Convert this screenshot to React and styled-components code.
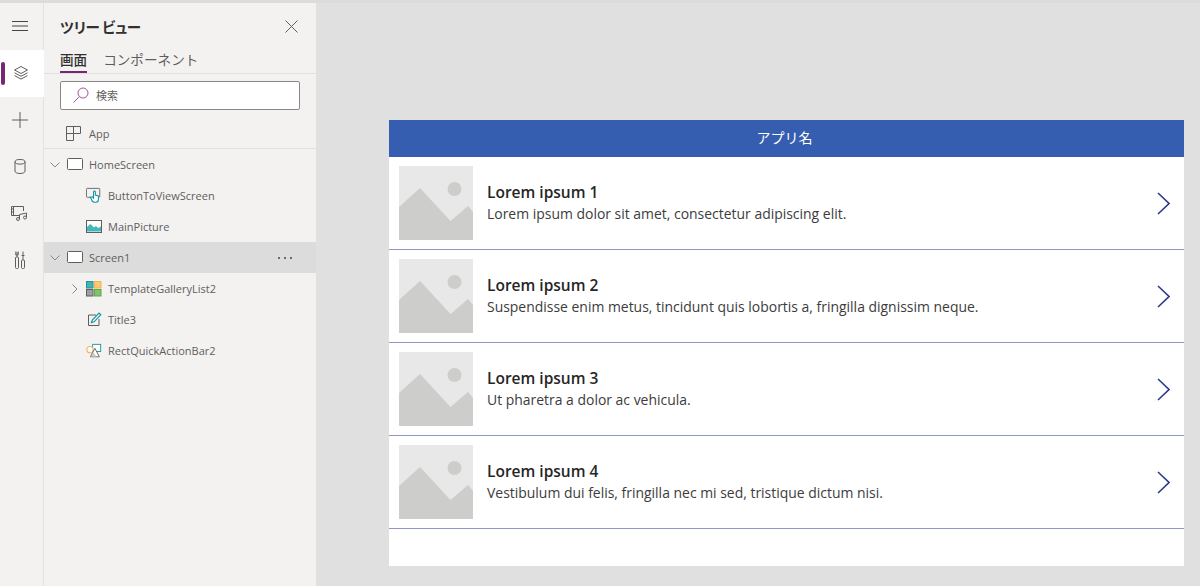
import React from "react";
import styled, { createGlobalStyle } from "styled-components";

const GlobalStyle = createGlobalStyle`
  html, body {
    margin: 0;
    padding: 0;
    height: 100%;
    overflow: hidden;
    background: #e0e0e0;
  }
  body {
    font-family: "Open Sans", "Noto Sans CJK JP", sans-serif;
  }
`;

const Page = styled.div`
  display: flex;
  height: 586px;
  width: 1200px;
  border-top: 3px solid #dcdcdc;
  box-sizing: border-box;
`;

const Rail = styled.nav`
  width: 44px;
  flex: none;
  display: flex;
  flex-direction: column;
  background: #f3f2f1;
  border-right: 1px solid #e3e2e1;
  box-sizing: border-box;
`;

const RailItem = styled.div`
  height: ${({ active }) => (active ? "47px" : "46.6px")};
  display: flex;
  align-items: center;
  justify-content: center;
  padding-right: 3px;
  box-sizing: border-box;
  position: relative;
  color: #605e5c;
  background: ${({ active }) => (active ? "#ffffff" : "transparent")};
  margin-right: ${({ active }) => (active ? "-1px" : "0")};
`;

const RailMarker = styled.span`
  position: absolute;
  left: 1px;
  top: 12px;
  width: 4px;
  height: 23px;
  border-radius: 2px;
  background: #742774;
`;

const Panel = styled.aside`
  width: 272px;
  flex: none;
  background: #f3f2f1;
  display: flex;
  flex-direction: column;
`;

const PanelHead = styled.div`
  height: 47px;
  display: flex;
  align-items: center;
  justify-content: space-between;
  padding: 0 18px 0 16px;
`;

const PanelTitle = styled.h2`
  margin: 0;
  font-size: 14.5px;
  font-weight: 700;
  letter-spacing: -0.4px;
  color: #323130;
  font-family: "Noto Sans CJK JP", sans-serif;
  font-feature-settings: "palt";
`;

const Tabs = styled.div`
  display: flex;
  gap: 16px;
  height: 23px;
  padding: 0 16px;
  border-bottom: 1px solid #e1dfdd;
`;

const Tab = styled.div`
  height: 23px;
  box-sizing: border-box;
  font-size: 13.6px;
  line-height: 19px;
  font-family: "Noto Sans CJK JP", sans-serif;
  color: ${({ active }) => (active ? "#323130" : "#605e5c")};
  font-weight: ${({ active }) => (active ? 500 : 400)};
  border-bottom: ${({ active }) => (active ? "2px solid #742774" : "none")};
`;

const SearchBox = styled.div`
  margin: 7px 16px 0;
  height: 29px;
  box-sizing: border-box;
  display: flex;
  align-items: center;
  gap: 7px;
  padding: 0 0 1px 12px;
  background: #ffffff;
  border: 1px solid #8a8886;
  border-radius: 2px;
  font-size: 11px;
  color: #605e5c;
  font-family: "Noto Sans CJK JP", sans-serif;
`;

const AppRow = styled.div`
  height: 39px;
  display: flex;
  align-items: center;
  gap: 8px;
  padding: 8px 0 0 22px;
  box-sizing: border-box;
  border-bottom: 1px solid #e1dfdd;
`;

const Row = styled.div`
  height: 31px;
  display: flex;
  align-items: center;
  padding-left: ${({ depth }) => (depth ? "42px" : "5px")};
  padding-right: 24px;
  background: ${({ selected }) => (selected ? "#dcdcdc" : "transparent")};
`;

const Chevron = styled.span`
  width: 12px;
  height: 12px;
  display: flex;
  align-items: center;
  justify-content: center;
  flex: none;
  margin-right: ${({ nested }) => (nested ? "5px" : "6px")};
  margin-left: ${({ nested }) => (nested ? "-17px" : "0")};
`;

const RowIcon = styled.span`
  width: 16px;
  height: 16px;
  flex: none;
  display: flex;
  align-items: center;
  justify-content: center;
  margin-right: 6px;
`;

const RowLabel = styled.span`
  flex: 1;
  font-size: 11px;
  color: #605e5c;
  white-space: nowrap;
`;

const Dots = styled.span`
  display: flex;
  gap: 4px;
  & > i {
    width: 2px;
    height: 2px;
    background: #484644;
    border-radius: 50%;
  }
`;

const Canvas = styled.main`
  flex: 1;
  padding: 117px 16px 20px 73px;
  background: #e0e0e0;
  display: flex;
`;

const Screen = styled.section`
  flex: 1;
  background: #ffffff;
  display: flex;
  flex-direction: column;
`;

const AppBar = styled.header`
  height: 37px;
  flex: none;
  box-sizing: border-box;
  padding: 0 4px 3px 0;
  background: #365eb0;
  color: #ffffff;
  font-size: 14px;
  font-family: "Noto Sans CJK JP", sans-serif;
  display: flex;
  align-items: center;
  justify-content: center;
`;

const Item = styled.article`
  height: 93px;
  box-sizing: border-box;
  flex: none;
  display: flex;
  align-items: center;
  padding: 0 14px 0 10px;
  border-bottom: 1px solid #8f97c9;
`;

const Thumb = styled.svg`
  width: 74px;
  height: 74px;
  flex: none;
  margin-right: 14px;
`;

const ItemText = styled.div`
  flex: 1;
  padding-bottom: 1px;
`;

const ItemTitle = styled.div`
  font-size: 15.5px;
  font-weight: 600;
  line-height: 22px;
  color: #262626;
`;

const ItemBody = styled.div`
  font-size: 13.95px;
  line-height: 20px;
  margin-top: 1px;
  color: #3c3c3c;
`;

const stroke = { fill: "none", stroke: "#605e5c", strokeWidth: 1 };

const ScreenIcon = () => (
  <svg width="16" height="13" viewBox="0 0 16 13">
    <rect x="0.5" y="0.5" width="15" height="11" rx="1" fill="#fff" stroke="#605e5c" />
  </svg>
);

const ButtonIcon = () => (
  <svg width="18" height="17" viewBox="0 0 18 17">
    <path d="M6 10.5H1.5a1 1 0 0 1-1-1V1.5a1 1 0 0 1 1-1h13a1 1 0 0 1 1 1v8a1 1 0 0 1-1 1H14" {...stroke} />
    <path d="M8.5 4.5a1 1 0 0 1 2 0V8l3.5 1v4a3 3 0 0 1-3 3H9.500a3 3 0 0 1-3-2.500L5 10.500 7 10l1.500 1.500z" fill="#fff" stroke="#0f95a5" strokeWidth="1.200" />
  </svg>
);

const PictureIcon = () => (
  <svg width="16" height="13" viewBox="0 0 16 13">
    <rect x="0.5" y="0.5" width="15" height="12" fill="#fff" stroke="#605e5c" />
    <path d="M1 11.500V7l3.500-3 3.500 3.500 2-1.500 2 2 3-1.500v5z" fill="#45b8b8" />
  </svg>
);

const GalleryIcon = () => (
  <svg width="16" height="16" viewBox="0 0 16 16">
    <rect x="0.500" y="0.500" width="6.500" height="6.500" fill="#3fb5b5" stroke="#2f8f8f" />
    <rect x="8.500" y="0.500" width="6.500" height="6.500" fill="#fdc874" stroke="#f2b457" />
    <rect x="0.500" y="8.500" width="6.500" height="6.500" fill="#a19f9d" stroke="#605e5c" />
    <rect x="8.500" y="8.500" width="6.500" height="6.500" fill="#7cc46c" stroke="#5aa84a" />
  </svg>
);

const TitleIcon = () => (
  <svg width="15" height="15" viewBox="0 0 15 15">
    <path d="M9 3H1.500v10.500H12V7" {...stroke} />
    <path d="M4.500 10.500l.8-2.500L12 1l1.800 1.800-6.800 7z" fill="#fff" stroke="#0f95a5" strokeWidth="1.200" />
  </svg>
);

const QuickBarIcon = () => (
  <svg width="18" height="16" viewBox="0 0 18 16">
    <rect x="7.500" y="0.500" width="9" height="8" fill="#fff" stroke="#0f95a5" />
    <circle cx="4.500" cy="6.500" r="3.500" fill="#fff" stroke="#f2b457" strokeWidth="1.200" />
    <path d="M10 5l5 9.500H5z" fill="#fff" stroke="#605e5c" />
    <path d="M8 9.500l4 5H6z" fill="#c8c6c4" />
  </svg>
);

const ChevronDown = () => (
  <svg width="10" height="6" viewBox="0 0 10 6"><path d="M0.500 0.500L5 5l4.500-4.500" fill="none" stroke="#8a8886" /></svg>
);

const ChevronRight = () => (
  <svg width="6" height="10" viewBox="0 0 6 10"><path d="M0.500 0.500L5 5 0.500 9.500" fill="none" stroke="#8a8886" /></svg>
);

const Placeholder = () => (
  <Thumb viewBox="0 0 74 74">
    <rect width="74" height="74" fill="#e8e8e8" />
    <circle cx="55.500" cy="23" r="7" fill="#cdcdcb" />
    <path d="M0 41L21 22 51.500 55 69 40 74 46V74H0z" fill="#cdcdcb" />
  </Thumb>
);

const NextArrow = () => (
  <svg width="13" height="23" viewBox="0 0 13 23">
    <path d="M1 1l11 10.500L1 22" fill="none" stroke="#2b3a8c" strokeWidth="1.600" />
  </svg>
);

const items = [
  ["Lorem ipsum 1", "Lorem ipsum dolor sit amet, consectetur adipiscing elit."],
  ["Lorem ipsum 2", "Suspendisse enim metus, tincidunt quis lobortis a, fringilla dignissim neque."],
  ["Lorem ipsum 3", "Ut pharetra a dolor ac vehicula."],
  ["Lorem ipsum 4", "Vestibulum dui felis, fringilla nec mi sed, tristique dictum nisi."],
];

export default function App() {
  return (
    <>
      <GlobalStyle />
      <Page>
        <Rail>
          <RailItem>
            <svg width="16" height="12" viewBox="0 0 16 12">
              <path d="M0 1.500h16M0 6h16M0 10.500h16" fill="none" stroke="#484644" />
            </svg>
          </RailItem>
          <RailItem active>
            <RailMarker />
            <svg width="16" height="16" viewBox="0 0 16 16">
              <path d="M8 1.500l6.500 3.500L8 8.500 1.500 5z" {...stroke} />
              <path d="M1.500 7.800L8 11.300l6.500-3.500M1.500 10.600L8 14.100l6.500-3.500" {...stroke} />
            </svg>
          </RailItem>
          <RailItem>
            <svg width="16" height="16" viewBox="0 0 16 16">
              <path d="M8 0v16M0 8h16" fill="none" stroke="#605e5c" />
            </svg>
          </RailItem>
          <RailItem>
            <svg width="12" height="15" viewBox="0 0 12 15">
              <ellipse cx="6" cy="2.800" rx="5" ry="2.300" {...stroke} />
              <path d="M1 2.800v9.400c0 1.300 2.200 2.300 5 2.300s5-1 5-2.300V2.800" {...stroke} />
            </svg>
          </RailItem>
          <RailItem>
            <svg width="18" height="16" viewBox="0 0 18 16">
              <path d="M8 10.500H.5V1.500h12V6M2.500 1.500v9M.5 4h2M.5 7h2" {...stroke} />
              <path d="M8.500 14V9.500l7-1.500v4.500" {...stroke} />
              <circle cx="7" cy="14" r="1.500" {...stroke} />
              <circle cx="14" cy="12.500" r="1.500" {...stroke} />
            </svg>
          </RailItem>
          <RailItem>
            <svg width="10" height="18" viewBox="0 0 10 18">
              <rect x="0.500" y="6" width="3" height="11.500" rx="1" {...stroke} />
              <path d="M2 6V1M.8.500v3.500h2.400V.5" {...stroke} />
              <rect x="6.500" y="9" width="3" height="8.500" rx="1" {...stroke} />
              <path d="M8 9V.5M6.500 4.500h3" {...stroke} />
            </svg>
          </RailItem>
        </Rail>
        <Panel>
          <PanelHead>
            <PanelTitle>ツリー ビュー</PanelTitle>
            <svg width="13" height="13" viewBox="0 0 13 13">
              <path d="M.5.500l12 12M12.500.500l-12 12" fill="none" stroke="#605e5c" />
            </svg>
          </PanelHead>
          <Tabs>
            <Tab active>画面</Tab>
            <Tab>コンポーネント</Tab>
          </Tabs>
          <SearchBox>
            <svg width="16" height="16" viewBox="0 0 16 16">
              <circle cx="10" cy="6" r="5" fill="none" stroke="#9b5c9b" />
              <path d="M6.500 9.500L.5 15.500" fill="none" stroke="#9b5c9b" />
            </svg>
            検索
          </SearchBox>
          <AppRow>
            <svg width="15" height="15" viewBox="0 0 15 15">
              <path d="M.5.500h14v7h-7v7h-7zM.5 7.500h7M7.500.500v7" {...stroke} />
            </svg>
            <RowLabel>App</RowLabel>
          </AppRow>
          <Row>
            <Chevron><ChevronDown /></Chevron>
            <RowIcon><ScreenIcon /></RowIcon>
            <RowLabel>HomeScreen</RowLabel>
          </Row>
          <Row depth={1}>
            <RowIcon><ButtonIcon /></RowIcon>
            <RowLabel>ButtonToViewScreen</RowLabel>
          </Row>
          <Row depth={1}>
            <RowIcon><PictureIcon /></RowIcon>
            <RowLabel>MainPicture</RowLabel>
          </Row>
          <Row selected>
            <Chevron><ChevronDown /></Chevron>
            <RowIcon><ScreenIcon /></RowIcon>
            <RowLabel>Screen1</RowLabel>
            <Dots><i /><i /><i /></Dots>
          </Row>
          <Row depth={1}>
            <Chevron nested><ChevronRight /></Chevron>
            <RowIcon><GalleryIcon /></RowIcon>
            <RowLabel>TemplateGalleryList2</RowLabel>
          </Row>
          <Row depth={1}>
            <RowIcon><TitleIcon /></RowIcon>
            <RowLabel>Title3</RowLabel>
          </Row>
          <Row depth={1}>
            <RowIcon><QuickBarIcon /></RowIcon>
            <RowLabel>RectQuickActionBar2</RowLabel>
          </Row>
        </Panel>
        <Canvas>
          <Screen>
            <AppBar>アプリ名</AppBar>
            {items.map(([title, body]) => (
              <Item key={title}>
                <Placeholder />
                <ItemText>
                  <ItemTitle>{title}</ItemTitle>
                  <ItemBody>{body}</ItemBody>
                </ItemText>
                <NextArrow />
              </Item>
            ))}
          </Screen>
        </Canvas>
      </Page>
    </>
  );
}
